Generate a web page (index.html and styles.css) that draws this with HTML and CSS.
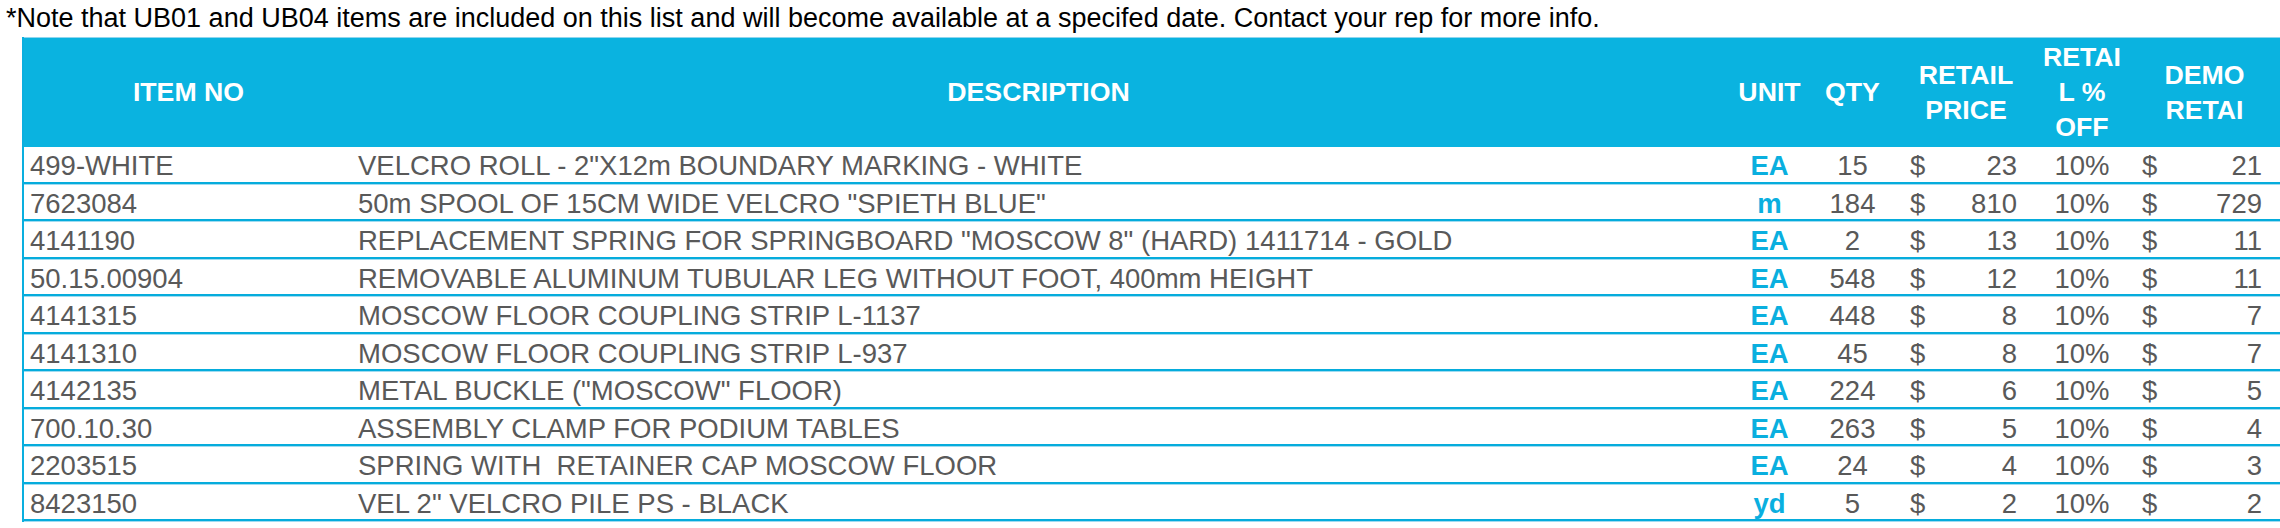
FILE: index.html
```html
<!DOCTYPE html>
<html>
<head>
<meta charset="utf-8">
<link rel="stylesheet" href="styles.css">
</head>
<body>
<div class="page">
  <div class="note">*Note that UB01 and UB04 items are included on this list and will become available at a specifed date. Contact your rep for more info.</div>
  <div class="sheet">
    <div class="row head">
      <div class="h">ITEM NO</div>
      <div class="h">DESCRIPTION</div>
      <div class="h">UNIT</div>
      <div class="h">QTY</div>
      <div class="h">RETAIL<br>PRICE</div>
      <div class="h">RETAI<br>L %<br>OFF</div>
      <div class="h">DEMO<br>RETAI</div>
    </div>
    <div class="row"><div class="c item">499-WHITE</div><div class="c desc">VELCRO ROLL - 2"X12m BOUNDARY MARKING - WHITE</div><div class="c unit">EA</div><div class="c qty">15</div><div class="c acc"><span>$</span><span>23</span></div><div class="c pct">10%</div><div class="c acc"><span>$</span><span>21</span></div></div>
    <div class="row"><div class="c item">7623084</div><div class="c desc">50m SPOOL OF 15CM WIDE VELCRO "SPIETH BLUE"</div><div class="c unit">m</div><div class="c qty">184</div><div class="c acc"><span>$</span><span>810</span></div><div class="c pct">10%</div><div class="c acc"><span>$</span><span>729</span></div></div>
    <div class="row"><div class="c item">4141190</div><div class="c desc">REPLACEMENT SPRING FOR SPRINGBOARD "MOSCOW 8" (HARD) 1411714 - GOLD</div><div class="c unit">EA</div><div class="c qty">2</div><div class="c acc"><span>$</span><span>13</span></div><div class="c pct">10%</div><div class="c acc"><span>$</span><span>11</span></div></div>
    <div class="row"><div class="c item">50.15.00904</div><div class="c desc">REMOVABLE ALUMINUM TUBULAR LEG WITHOUT FOOT, 400mm HEIGHT</div><div class="c unit">EA</div><div class="c qty">548</div><div class="c acc"><span>$</span><span>12</span></div><div class="c pct">10%</div><div class="c acc"><span>$</span><span>11</span></div></div>
    <div class="row"><div class="c item">4141315</div><div class="c desc">MOSCOW FLOOR COUPLING STRIP L-1137</div><div class="c unit">EA</div><div class="c qty">448</div><div class="c acc"><span>$</span><span>8</span></div><div class="c pct">10%</div><div class="c acc"><span>$</span><span>7</span></div></div>
    <div class="row"><div class="c item">4141310</div><div class="c desc">MOSCOW FLOOR COUPLING STRIP L-937</div><div class="c unit">EA</div><div class="c qty">45</div><div class="c acc"><span>$</span><span>8</span></div><div class="c pct">10%</div><div class="c acc"><span>$</span><span>7</span></div></div>
    <div class="row"><div class="c item">4142135</div><div class="c desc">METAL BUCKLE ("MOSCOW" FLOOR)</div><div class="c unit">EA</div><div class="c qty">224</div><div class="c acc"><span>$</span><span>6</span></div><div class="c pct">10%</div><div class="c acc"><span>$</span><span>5</span></div></div>
    <div class="row"><div class="c item">700.10.30</div><div class="c desc">ASSEMBLY CLAMP FOR PODIUM TABLES</div><div class="c unit">EA</div><div class="c qty">263</div><div class="c acc"><span>$</span><span>5</span></div><div class="c pct">10%</div><div class="c acc"><span>$</span><span>4</span></div></div>
    <div class="row"><div class="c item">2203515</div><div class="c desc">SPRING WITH&nbsp; RETAINER CAP MOSCOW FLOOR</div><div class="c unit">EA</div><div class="c qty">24</div><div class="c acc"><span>$</span><span>4</span></div><div class="c pct">10%</div><div class="c acc"><span>$</span><span>3</span></div></div>
    <div class="row"><div class="c item">8423150</div><div class="c desc">VEL 2" VELCRO PILE PS - BLACK</div><div class="c unit">yd</div><div class="c qty">5</div><div class="c acc"><span>$</span><span>2</span></div><div class="c pct">10%</div><div class="c acc"><span>$</span><span>2</span></div></div>
  </div>
</div>
</body>
</html>
```

FILE: styles.css
```css
html, body {
  margin: 0;
  padding: 0;
  background: #ffffff;
  overflow: hidden;
}
body {
  width: 2280px;
  height: 528px;
  font-family: "Liberation Sans", Arial, sans-serif;
}
.page {
  width: 2280px;
}
.note {
  height: 37px;
  box-sizing: border-box;
  padding: 4px 0 0 6px;
  font-size: 27px;
  line-height: 28px;
  color: #000000;
  white-space: nowrap;
}
.sheet {
  margin-left: 22px;
  width: 2265px;
  border-left: 2px solid #0aafdf;
  box-sizing: border-box;
}
.row {
  display: grid;
  grid-template-columns: 329px 1371px 91px 75px 152px 80px 165px;
  height: 37.5px;
  box-sizing: border-box;
  background: linear-gradient(to top, #9fdcf1 0 1px, #05acdc 1px 3px, transparent 3px);
  color: #595959;
  font-size: 27.5px;
}
.row.head {
  height: 110px;
  background: #0ab3e0;
  border-top: 1px solid #8fd6ee;
}
.h {
  display: flex;
  align-items: center;
  justify-content: center;
  text-align: center;
  color: #ffffff;
  font-weight: bold;
  font-size: 26.7px;
  line-height: 35px;
}
.c {
  padding-top: 6px;
  line-height: 26px;
  white-space: nowrap;
}
.item {
  padding-left: 6px;
}
.desc {
  padding-left: 5px;
}
.unit {
  text-align: center;
  font-weight: bold;
  color: #0aafdf;
}
.qty {
  text-align: center;
}
.pct {
  text-align: center;
}
.acc {
  display: flex;
  justify-content: space-between;
  padding-left: 20px;
  padding-right: 25px;
}
```
